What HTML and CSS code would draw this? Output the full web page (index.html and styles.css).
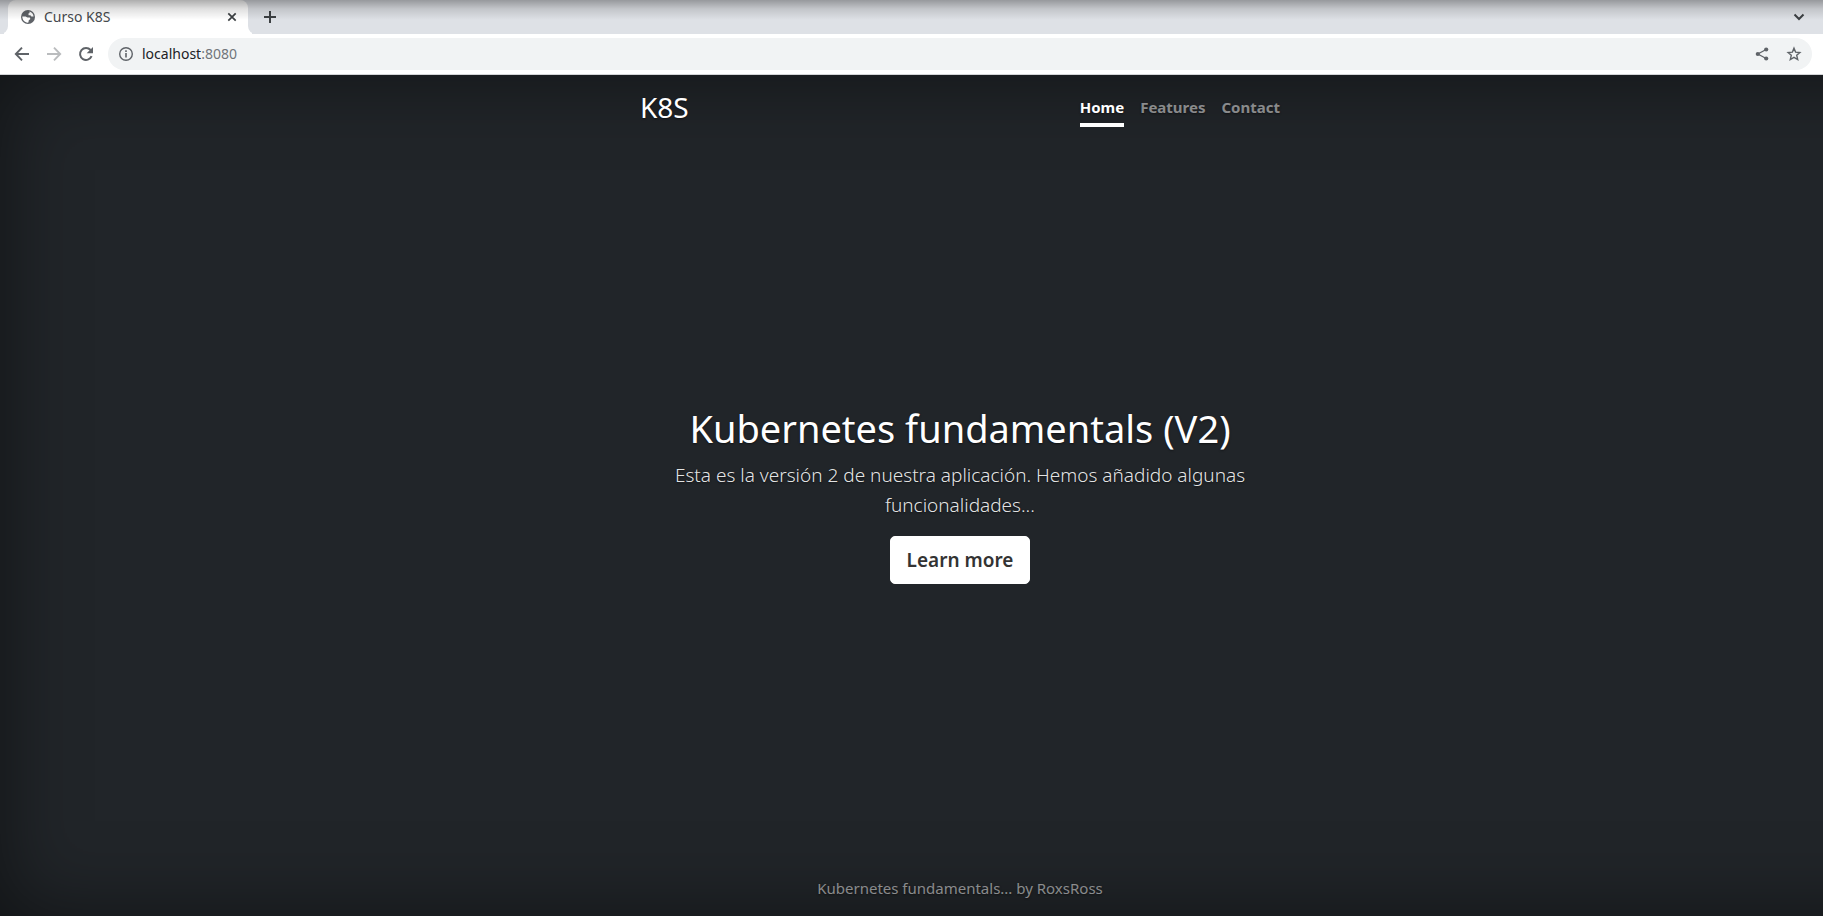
FILE: index.html
```html
<!DOCTYPE html>
<html lang="es">
<head>
<meta charset="utf-8">
<title>Curso K8S</title>
<link rel="stylesheet" href="styles.css">
</head>
<body>
<div class="window">
  <div class="tab-strip">
    <div class="tab-edge"></div>
    <div class="tab">
      <svg class="favicon" viewBox="0 0 16 16" aria-hidden="true"><circle cx="8" cy="8" r="7" fill="#5f6368"/><path d="M9.400 2.600C11.800 3.200 13.400 5.200 13.600 7.400H11.400L10.400 6.200H8.600L8.400 4.600 9.600 4Z" fill="#fff"/><path d="M2.300 7.600H5.600L7.400 8.600H9.800L10.400 10 8.800 11.200 8.400 13.600C5 14 2.300 11.200 2.300 7.600Z" fill="#fff"/></svg>
      <span class="tab-title">Curso K8S</span>
      <button class="icon-button" aria-label="Cerrar"><svg viewBox="0 0 16 16"><path d="m4.3 4.3 7.4 7.4m0-7.4-7.4 7.4" stroke="#3c4043" stroke-width="1.7"/></svg></button>
    </div>
    <div class="tab-edge tab-edge-right"></div>
    <button class="icon-button new-tab" aria-label="Nueva pestaña"><svg viewBox="0 0 16 16"><path d="M8 2v12M2 8h12" stroke="#3c4043" stroke-width="2"/></svg></button>
    <button class="icon-button tab-search" aria-label="Buscar pestañas"><svg viewBox="0 0 16 16"><path d="m3.5 5.500 4.500 4.500 4.500-4.500" fill="none" stroke="#3c4043" stroke-width="2"/></svg></button>
  </div>
  <div class="toolbar">
    <button class="icon-button" aria-label="Atrás"><svg viewBox="0 0 16 16"><path d="M15 8H2.200M8 1.600 1.800 8 8 14.400" fill="none" stroke="#5f6368" stroke-width="1.900"/></svg></button>
    <button class="icon-button" aria-label="Adelante"><svg viewBox="0 0 16 16"><path d="M1 8h12.800M8 1.600 14.200 8 8 14.400" fill="none" stroke="#babcbe" stroke-width="1.900"/></svg></button>
    <button class="icon-button" aria-label="Recargar"><svg viewBox="0 0 16 16"><path d="M13.600 10.200A6 6 0 1 1 12.600 4" fill="none" stroke="#5f6368" stroke-width="2"/><path d="M15 .9V7.200H8.700Z" fill="#5f6368"/></svg></button>
    <div class="address-bar">
      <svg class="info" viewBox="0 0 16 16" aria-hidden="true"><circle cx="8" cy="8" r="6.300" fill="none" stroke="#5f6368" stroke-width="1.400"/><path d="M8 7v4.600M8 4.300v1.600" stroke="#5f6368" stroke-width="1.600"/></svg>
      <span class="address">localhost<span class="port">:8080</span></span>
      <button class="icon-button" aria-label="Compartir"><svg viewBox="0 0 16 16"><path d="M12.200 3.500 3.800 8l8.400 4.500" fill="none" stroke="#5f6368" stroke-width="1.300"/><circle cx="12.200" cy="3.500" r="2.100" fill="#5f6368"/><circle cx="3.800" cy="8" r="2.100" fill="#5f6368"/><circle cx="12.200" cy="12.500" r="2.100" fill="#5f6368"/></svg></button>
      <button class="icon-button" aria-label="Marcador"><svg viewBox="0 0 16 16"><path d="m8 2.200 1.600 3.900 4.300.4-3.200 2.800 1 4.200L8 11.300l-3.700 2.200 1-4.200-3.200-2.800 4.300-.4Z" fill="none" stroke="#5f6368" stroke-width="1.400"/></svg></button>
    </div>
  </div>
  <div class="viewport">
    <div class="page">
      <div class="cover">
        <header class="masthead">
          <h3 class="brand">K8S</h3>
          <nav class="nav">
            <a class="nav-link active" href="#home">Home</a>
            <a class="nav-link" href="#features">Features</a>
            <a class="nav-link" href="#contact">Contact</a>
          </nav>
        </header>
        <main class="hero">
          <h1 class="title">Kubernetes fundamentals (V2)</h1>
          <p class="lead">Esta es la versión 2 de nuestra aplicación. Hemos añadido algunas funcionalidades...</p>
          <a class="button" href="#more">Learn more</a>
        </main>
        <footer class="footer">Kubernetes fundamentals... by RoxsRoss</footer>
      </div>
    </div>
  </div>
</div>
</body>
</html>
```
FILE: styles.css
```css
* { box-sizing: border-box; }
body { margin: 0; font-family: "Noto Sans", sans-serif; }
h1, h3, p { margin: 0; }
.window { display: flex; flex-direction: column; height: 100vh; overflow: hidden; }

.tab-strip {
  display: flex; align-items: center; height: 34px; flex: none;
  background: #dee1e6; position: relative;
}
.tab-strip::after {
  content: ""; position: absolute; inset: 0 0 auto; height: 20px; pointer-events: none;
  background: linear-gradient(rgba(0, 0, 0, .32), rgba(0, 0, 0, .12) 45%, rgba(0, 0, 0, 0));
}
.tab-edge { width: 8px; height: 100%; background: #dee1e6; border-bottom-right-radius: 8px; box-shadow: 4px 4px 0 #fff; clip-path: inset(0); }
.tab-edge-right { border-radius: 0 0 0 8px; box-shadow: -4px 4px 0 #fff; }
.tab {
  display: flex; align-items: center; gap: 8px; width: 240px; height: 100%;
  padding: 0 8px 0 12px; background: #fff; border-radius: 8px 8px 0 0;
}
.favicon, .info { width: 16px; height: 16px; flex: none; }
.tab-title { flex: 1; padding-bottom: 2px; font-size: 14px; color: #45494d; }
.icon-button { display: block; width: 16px; height: 16px; padding: 0; border: 0; background: none; flex: none; }
.icon-button svg { display: block; width: 100%; height: 100%; }
.new-tab { margin-left: 6px; }
.tab-search { margin: 0 16px 0 auto; }

.toolbar {
  display: flex; align-items: center; gap: 16px; height: 41px; flex: none;
  padding: 0 11px 0 14px; background: #fff; border-bottom: 1px solid #d3d5d7;
}
.address-bar {
  display: flex; align-items: center; gap: 8px; flex: 1; height: 32px;
  margin-left: -2px; padding: 0 10px; border-radius: 16px; background: #f1f3f4;
}
.address-bar .icon-button { margin-left: 8px; }
.address { flex: 1; padding-bottom: 2px; font-size: 14px; color: #202124; }
.port { color: #70757a; }

.viewport { flex: 1; min-height: 0; display: flex; overflow: hidden; background: #212529; }
.page {
  flex: none; width: calc(100% + 97px); color: #fff; text-align: center;
  text-shadow: 0 1px 2px rgba(0, 0, 0, .5);
  box-shadow: inset 0 0 80px rgba(0, 0, 0, .5);
}
.cover {
  display: flex; flex-direction: column; justify-content: space-between;
  max-width: 672px; height: 100%; margin: 0 auto; padding: 16px; font-size: 15px; line-height: 24px;
}
.masthead { display: flex; justify-content: space-between; }
.brand { font-size: 28px; font-weight: 400; line-height: 32px; }
.nav { display: flex; gap: 16px; }
.nav-link {
  padding: 4px 0; color: rgba(255, 255, 255, .5); font-weight: 700;
  text-decoration: none; border-bottom: 4px solid transparent;
}
.nav-link.active { color: #fff; border-color: #fff; }
.hero { padding: 0 16px 16px; }
.title { margin-bottom: 8px; font-size: 38px; font-weight: 400; line-height: 48px; }
.lead { margin-bottom: 16px; font-size: 19px; font-weight: 300; line-height: 30px; color: rgba(255, 255, 255, .9); }
.button {
  display: inline-block; padding: 8px 16px; border: 1px solid #fff; border-radius: 5px;
  background: #fff; color: #333; font-size: 19px; font-weight: 600; line-height: 30px;
  text-decoration: none; text-shadow: none;
}
.footer { color: rgba(255, 255, 255, .5); }
```
